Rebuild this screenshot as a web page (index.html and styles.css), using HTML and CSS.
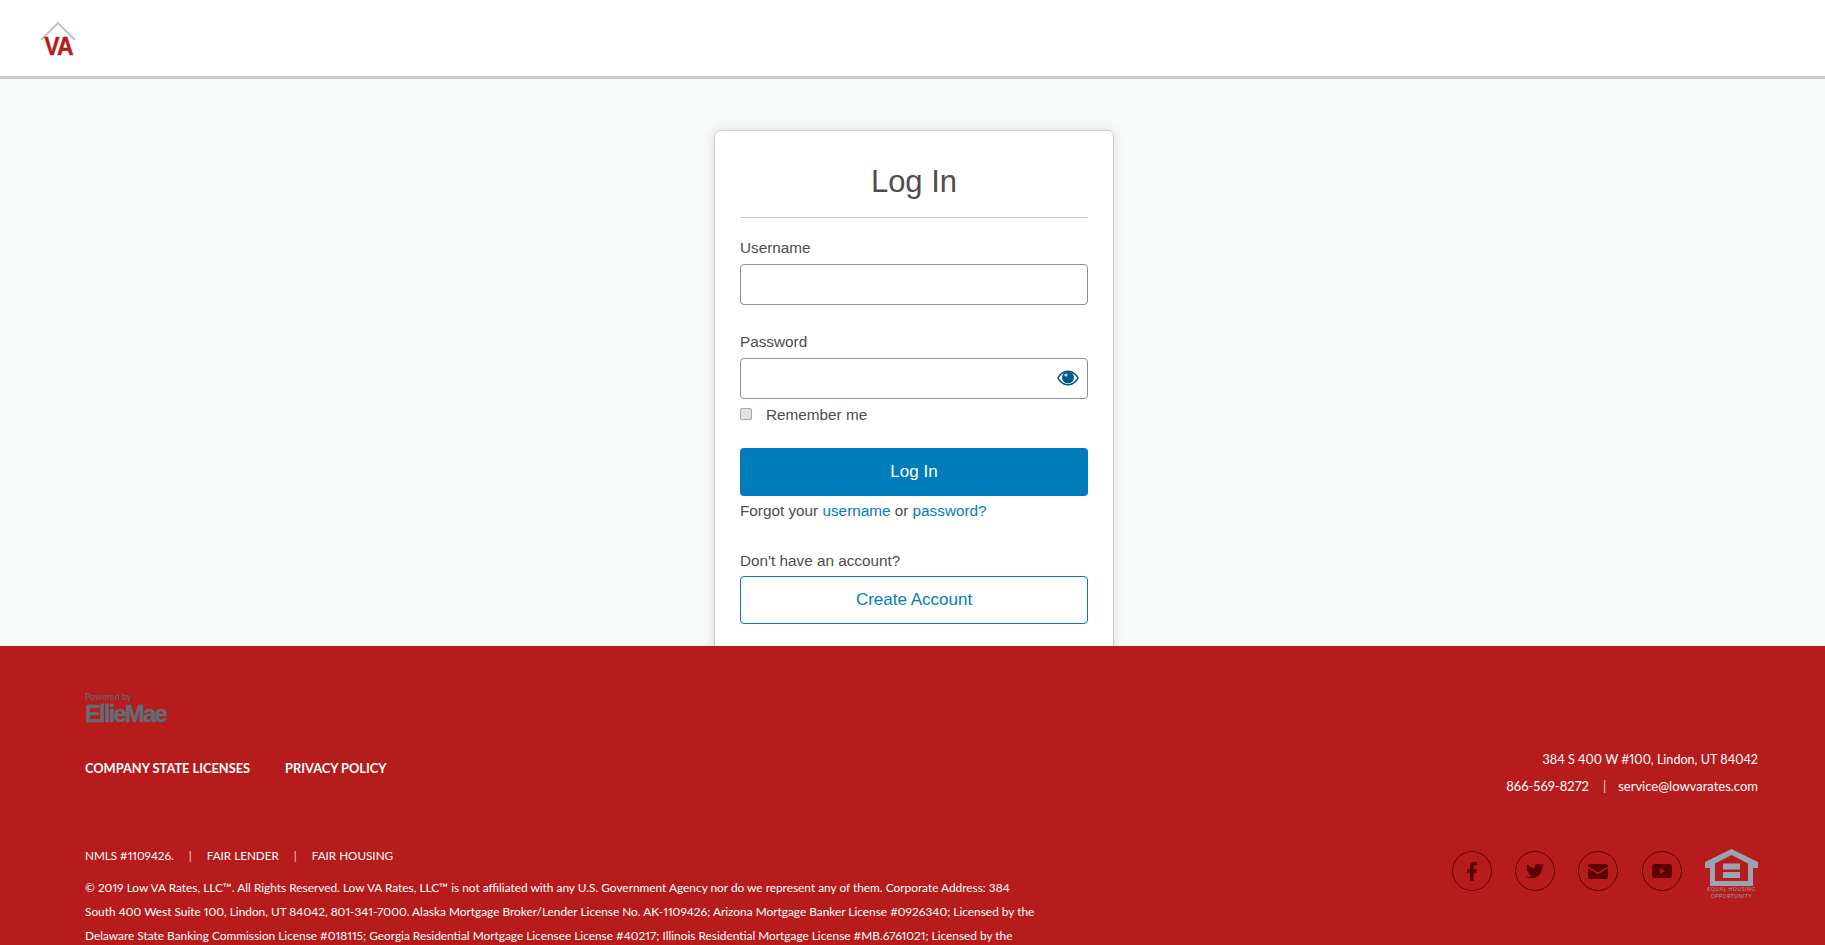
FILE: index.html
```html
<!DOCTYPE html>
<html lang="en">

<head>
    <meta charset="UTF-8">
    <title>Log In</title>
    <link rel="stylesheet" href="styles.css">
</head>

<body>

    <!-- top bar -->
    <header class="site-header">
        <a class="logo" href="#">
            <svg class="logo-roof" viewBox="0 0 36 20" width="36" height="20">
                <path d="M1 19 L18 2 L35 19" fill="none" stroke="#c4c4c4" stroke-width="2" />
            </svg>
            <span class="logo-text">VA</span>
        </a>
    </header>

    <!-- login card -->
    <main class="login-area">
        <form class="login-card">
            <h1 class="login-title">Log In</h1>

            <label class="field-label" for="username">Username</label>
            <input class="field-input" id="username" type="text">

            <label class="field-label field-label-next" for="password">Password</label>
            <div class="password-wrap">
                <input class="field-input" id="password" type="password">
                <svg class="eye-icon" viewBox="0 0 22 16" width="22" height="16">
                    <path fill="currentColor" fill-rule="evenodd" d="M11 .5C6 .5 2.200 3.700 .2 8c2 4.300 5.800 7.500 10.800 7.500s8.800-3.200 10.800-7.500C19.800 3.700 16 .5 11 .5zM11 2C7.300 2 3.800 4.600 1.900 8c1.900 3.400 5.400 6 9.100 6s7.200-2.600 9.100-6C18.200 4.600 14.700 2 11 2z" />
                    <circle cx="11" cy="7.500" r="6" fill="currentColor" />
                    <circle cx="9" cy="5" r="1.600" fill="#fff" opacity="0.75" />
                </svg>
            </div>

            <label class="remember">
                <input class="remember-box" type="checkbox">
                <span>Remember me</span>
            </label>

            <button class="btn btn-primary" type="button">Log In</button>
            <p class="helper">Forgot your <a href="#">username</a> or <a href="#">password?</a></p>

            <p class="helper helper-account">Don't have an account?</p>
            <button class="btn btn-outline" type="button">Create Account</button>
        </form>
    </main>

    <!-- footer -->
    <footer class="site-footer">
        <div class="footer-top">
            <div>
                <div class="powered">
                    <span class="powered-by">Powered by</span>
                    <span class="powered-name">EllieMae</span>
                </div>
                <nav class="footer-links">
                    <a href="#">COMPANY STATE LICENSES</a>
                    <a href="#">PRIVACY POLICY</a>
                </nav>
            </div>
            <div class="contact">
                <p>384 S 400 W #100, Lindon, UT 84042</p>
                <p class="contact-line">866-569-8272<span class="sep sep-contact">|</span>service@lowvarates.com</p>
            </div>
        </div>

        <div class="footer-bottom">
            <div class="legal">
                <p class="legal-links">NMLS #1109426.<span class="sep">|</span>FAIR LENDER<span class="sep">|</span>FAIR HOUSING</p>
                <p class="legal-text">© 2019 Low VA Rates, LLC™. All Rights Reserved. Low VA Rates, LLC™ is not affiliated with any U.S. Government Agency nor do we represent any of them. Corporate Address: 384 South 400 West Suite 100, Lindon, UT 84042, 801-341-7000. Alaska Mortgage Broker/Lender License No. AK-1109426; Arizona Mortgage Banker License #0926340; Licensed by the Delaware State Banking Commission License #018115; Georgia Residential Mortgage Licensee License #40217; Illinois Residential Mortgage License #MB.6761021; Licensed by the</p>
            </div>

            <div class="social">
                <a class="social-icon" href="#">
                    <svg viewBox="0 0 320 512" width="12" height="19"><path fill="currentColor" d="M279.14 288l14.22-92.66h-88.91v-60.13c0-25.35 12.42-50.06 52.24-50.06h40.42V6.26S260.43 0 225.36 0c-73.22 0-121.08 44.38-121.08 124.72v70.62H22.89V288h81.39v224h100.17V288z" /></svg>
                </a>
                <a class="social-icon" href="#">
                    <svg viewBox="0 0 512 512" width="18" height="18"><path fill="currentColor" d="M459.37 151.716c.325 4.548.325 9.097.325 13.645 0 138.72-105.583 298.558-298.558 298.558-59.452 0-114.68-17.219-161.137-47.106 8.447.974 16.568 1.299 25.34 1.299 49.055 0 94.213-16.568 130.274-44.832-46.132-.975-84.792-31.188-98.112-72.772 6.498.974 12.995 1.624 19.818 1.624 9.421 0 18.843-1.3 27.614-3.573-48.081-9.747-84.143-51.98-84.143-102.985v-1.299c13.969 7.797 30.214 12.67 47.431 13.319-28.264-18.843-46.781-51.005-46.781-87.391 0-19.492 5.197-37.36 14.294-52.954 51.655 63.675 129.3 105.258 216.365 109.807-1.624-7.797-2.599-15.918-2.599-24.04 0-57.828 46.782-104.934 104.934-104.934 30.213 0 57.502 12.67 76.67 33.137 23.715-4.548 46.456-13.32 66.599-25.34-7.798 24.366-24.366 44.833-46.132 57.827 21.117-2.273 41.584-8.122 60.426-16.243-14.292 20.791-32.161 39.308-52.628 54.253z" /></svg>
                </a>
                <a class="social-icon" href="#">
                    <svg viewBox="0 0 20 15" width="20" height="15"><path fill="currentColor" d="M2 0h16a2 2 0 0 1 2 2v.6L10 8.600 0 2.600V2a2 2 0 0 1 2-2zM0 4.200l10 6 10-6V13a2 2 0 0 1-2 2H2a2 2 0 0 1-2-2z" /></svg>
                </a>
                <a class="social-icon" href="#">
                    <svg viewBox="0 0 20 14" width="20" height="14"><path fill="currentColor" fill-rule="evenodd" d="M3 0h14a3 3 0 0 1 3 3v8a3 3 0 0 1-3 3H3a3 3 0 0 1-3-3V3a3 3 0 0 1 3-3zM8 4.200v5.600L13 7z" /></svg>
                </a>
                <div class="housing">
                    <svg viewBox="0 0 53 37" width="53" height="37"><path fill="currentColor" fill-rule="evenodd" d="M26.500 0 53 13v6h-5v18H5V19H0v-6zM26.500 6 10 14.500V32h33V14.500zM18 14.500h17v6H18zM18 23h17v6H18z" /></svg>
                    <span class="housing-text">EQUAL HOUSING OPPORTUNITY</span>
                </div>
            </div>
        </div>
    </footer>

</body>

</html>
```

FILE: styles.css
```css
* {
    box-sizing: border-box;
}

html,
body {
    height: 100%;
}

body {
    margin: 0;
    height: 945px;
    overflow: hidden;
    display: flex;
    flex-direction: column;
    background: #f8fafa;
    font-family: "Liberation Sans", Arial, sans-serif;
    color: #4d4d4d;
}

p {
    margin: 0;
}

a {
    text-decoration: none;
}

/* header */
.site-header {
    flex: none;
    height: 79px;
    padding: 21px 0 0 40px;
    background: #fff;
    border-bottom: 3px solid #c9cbcb;
    position: relative;
    z-index: 2;
}

.logo {
    display: flex;
    flex-direction: column;
    width: 36px;
    align-items: center;
}

.logo-roof {
    display: block;
    flex: none;
}

.logo-text {
    margin-top: -6px;
    font-size: 25px;
    line-height: 22px;
    font-weight: bold;
    letter-spacing: -1px;
    color: #b71c1c;
    -webkit-text-stroke: 0.4px #b71c1c;
    transform: scaleX(0.92);
}

/* login */
.login-area {
    flex: none;
    height: 567px;
    overflow: hidden;
    padding: 51px 0 0 3px;
    display: flex;
    justify-content: center;
}

.login-card {
    width: 400px;
    height: 560px;
    padding: 33px 25px 0;
    background: #fff;
    border: 1px solid #cdcdcd;
    border-radius: 6px;
    box-shadow: 0 0 12px rgba(0, 0, 0, 0.12);
}

.login-title {
    margin: 0 0 20px;
    padding-bottom: 17px;
    border-bottom: 1px solid #c8c8c8;
    font-size: 31px;
    line-height: 36px;
    font-weight: normal;
    text-align: center;
}

.field-label {
    display: block;
    margin-bottom: 6px;
    font-size: 15.3px;
    line-height: 20px;
}

.field-label-next {
    margin-top: 27px;
}

.field-input {
    display: block;
    width: 100%;
    height: 41px;
    padding: 0 10px;
    background: #fff;
    border: 1px solid #8e8e8e;
    border-radius: 4px;
    font-size: 15px;
}

.password-wrap {
    position: relative;
}

.eye-icon {
    position: absolute;
    top: 12px;
    right: 9px;
    color: #00598c;
}

.remember {
    display: flex;
    align-items: center;
    height: 20px;
    margin-top: 6px;
    font-size: 15.3px;
}

.remember-box {
    appearance: none;
    width: 12px;
    height: 12px;
    margin: 0 14px 3px 0;
    background: #e2e2e2;
    border: 1px solid #a9a9a9;
    border-radius: 2px;
}

.btn {
    display: block;
    width: 100%;
    height: 48px;
    border-radius: 4px;
    font-family: inherit;
    font-size: 17px;
}

.btn-primary {
    margin-top: 23px;
    border: 0;
    background: #007dba;
    color: #fff;
}

.btn-outline {
    margin-top: 5px;
    border: 1px solid #007dba;
    background: #fff;
    color: #007dba;
}

.helper {
    margin-top: 5px;
    font-size: 15.3px;
    line-height: 20px;
}

.helper a {
    color: #007dba;
}

.helper-account {
    margin-top: 30px;
}

/* footer */
.site-footer {
    flex: none;
    height: 299px;
    overflow: hidden;
    padding: 44px 67px 0 85px;
    background: #b71c1c;
    color: #fff;
    font-family: Lato, "Liberation Sans", sans-serif;
    font-variant-numeric: proportional-nums;
    position: relative;
    z-index: 1;
}

.footer-top {
    display: flex;
    justify-content: space-between;
    height: 156px;
}

.powered {
    display: flex;
    flex-direction: column;
    color: #616c76;
}

.powered-by {
    margin-top: 1px;
    font-size: 9px;
    line-height: 12px;
}

.powered-name {
    margin-top: 1px;
    font-family: "Liberation Sans", sans-serif;
    font-size: 24px;
    line-height: 20px;
    font-weight: bold;
    letter-spacing: -1.9px;
    -webkit-text-stroke: 0.4px #616c76;
}

.footer-links {
    display: flex;
    gap: 35px;
    margin-top: 35px;
}

.footer-links a {
    color: #fff;
    font-size: 12.8px;
    line-height: 18px;
    font-weight: bold;
}

.contact {
    padding-top: 56px;
    text-align: right;
    font-size: 12.6px;
    line-height: 27px;
}

.contact-line {
    font-size: 13px;
}

.sep {
    margin: 0 15px;
    opacity: 0.8;
}

.sep-contact {
    margin: 0 12px 0 14px;
}

.footer-bottom {
    display: flex;
    justify-content: space-between;
}

.legal {
    width: 950px;
}

.legal-links {
    font-size: 11.7px;
    line-height: 18px;
}

.legal-text {
    margin-top: 12px;
    font-size: 11.87px;
    line-height: 24px;
}

.social {
    display: flex;
    gap: 23.3px;
    align-items: flex-start;
    margin-top: 5px;
}

.social-icon {
    display: flex;
    align-items: center;
    justify-content: center;
    width: 40px;
    height: 40px;
    border: 1px solid #5c0000;
    border-radius: 50%;
    color: #5c0000;
}

.housing {
    display: flex;
    flex-direction: column;
    align-items: center;
    width: 53px;
    margin-top: -2px;
    color: #9aa3b0;
}

.housing-text {
    font-size: 5px;
    line-height: 7px;
    letter-spacing: 0.6px;
    text-align: center;
}
```
